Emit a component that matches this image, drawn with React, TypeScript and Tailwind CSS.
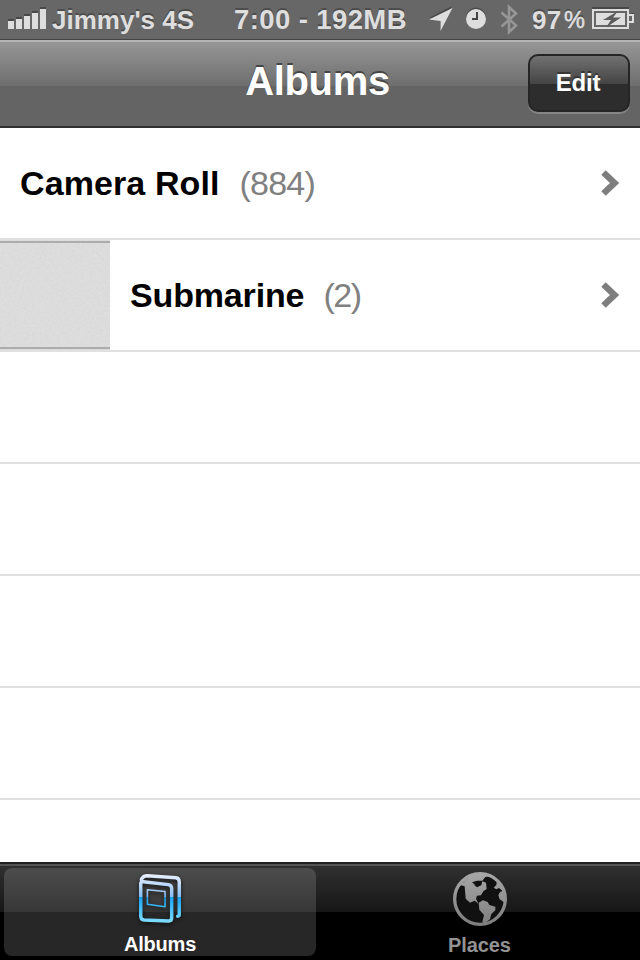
import React from "react";

const shadow = "[text-shadow:0_-2px_0_#4c4c4c]";

function StatusBar() {
  return (
    <header className={`flex h-10 items-center border-b border-[#454545] bg-[#676767] text-[26px] leading-10 font-bold text-[#dedede] ${shadow}`}>
      <svg className="ml-2 h-10 w-[38px] shrink-0" viewBox="0 0 38 40" shapeRendering="crispEdges">
        <path fill="#484848" d="M0 19h6v2H0zM8 17h6v2H8zM16 14h6v2h-6zM24 11h6v2h-6zM32 7h6v2h-6z" />
        <path fill="#dedede" d="M0 21h6v8H0zM8 19h6v10H8zM16 16h6v13h-6zM24 13h6v16h-6zM32 9h6v20h-6z" />
      </svg>
      <span className="ml-[6px] w-[182px] shrink-0 whitespace-nowrap">Jimmy's 4S</span>
      <span className="w-[195px] shrink-0 text-[27.5px] tracking-[0.4px] whitespace-nowrap">7:00 - 192MB</span>
      <svg className="h-10 w-[25px] shrink-0" viewBox="429 0 25 40">
        <path fill="#484848" d="M452 6 429 18l11 1v10z" />
        <path fill="#dedede" d="M452.500 8 429 19.500l11.500 1.500L440.500 31z" />
      </svg>
      <svg className="ml-[11px] h-10 w-[22px] shrink-0" viewBox="465 0 22 40">
        <circle cx="476" cy="17.500" r="10" fill="#484848" />
        <circle cx="476" cy="19" r="10" fill="#dedede" />
        <path d="M477 12v7h-5" fill="none" stroke="#454545" strokeWidth="2" />
      </svg>
      <svg className="ml-[13px] h-10 w-[20px] shrink-0" viewBox="500 0 20 40">
        <path d="m501.500 12.500 14.500 13-7 6.500V7l7 6.500-14.500 13" fill="none" stroke="#969696" strokeWidth="2.600" />
      </svg>
      <span className="ml-[12px] w-[32px] shrink-0 tracking-[0.3px]">97</span>
      <span className="w-[28px] shrink-0 text-[23.5px] font-normal [-webkit-text-stroke:0.600px_#dedede]">%</span>
      <svg className="h-10 w-[44px] shrink-0" viewBox="592 0 44 40">
        <path d="M592 9V7h37v2M630 13h4v2" fill="#484848" />
        <path d="M593 10h35v18h-35z" fill="none" stroke="#dedede" strokeWidth="2" />
        <path d="M629 15h4v7h-4" fill="none" stroke="#dedede" strokeWidth="2" />
        <path d="M596 13h29v12h-29z" fill="#dedede" />
        <path d="m618 11-15 9h8l-5 7.500 15-10h-8z" fill="#5c5c5c" />
      </svg>
    </header>
  );
}

function Navigation() {
  return (
    <nav className="grid h-[88px] grid-cols-[112px_1fr_112px] border-t-2 border-b-2 border-t-[#b5b5b5] border-b-[#303030] bg-[linear-gradient(to_bottom,#969696_0px,#6e6e6e_44px,#646464_44px,#646464_100%)]">
      <h1 className="col-start-2 pr-[5px] text-center text-[40px] leading-[78px] font-bold tracking-[-0.35px] text-white [text-shadow:0_-2px_0_#454545]">Albums</h1>
      <div className="flex justify-end pt-3 pr-[10px]">
        <button className="h-[58px] w-[102px] rounded-[10px] border-2 border-[#252525] bg-[linear-gradient(to_bottom,#717171_0px,#444_28px,#2d2d2d_28px)] pr-[2px] text-[24px] leading-none font-bold tracking-[-0.2px] text-white shadow-[0_2px_0_#858585] [text-shadow:0_-2px_0_#363636]">Edit</button>
      </div>
    </nav>
  );
}

function AlbumRow({ name, count, thumb = false }: { name: string; count: number; thumb?: boolean }) {
  return (
    <li className="flex h-28 border-b-2 border-[#e0e0e0]">
      {thumb && (
        <svg className="h-[110px] w-[110px]" viewBox="0 0 110 110">
          <filter id="grain" x="0" y="0" width="1" height="1" colorInterpolationFilters="sRGB">
            <feTurbulence type="fractalNoise" baseFrequency="0.4" numOctaves="2" />
            <feColorMatrix values="0.04 0 0 0 0.842 0.04 0 0 0 0.842 0.04 0 0 0 0.842 0 0 0 0 1" />
          </filter>
          <rect width="110" height="110" filter="url(#grain)" />
          <path d="M0 2h110M0 108h110" stroke="#acacac" strokeWidth="2" />
        </svg>
      )}
      <div className="flex flex-1 items-center pr-[20px] pl-5 text-[34px] leading-[110px]">
        <strong className={thumb ? "tracking-[-0.15px] text-black" : "tracking-[0.1px] text-black"}>{name}</strong>
        <span className={thumb ? "ml-[19px] tracking-[-1.5px] text-[#808080]" : "ml-[20px] tracking-[-0.8px] text-[#808080]"}>({count})</span>
        <svg className="ml-auto h-[26px] w-[20px]" viewBox="0 0 20 26">
          <path d="m3.500 2.500 11 10.500L3.500 23.500" fill="none" stroke="#7e7e7e" strokeWidth="6.500" />
        </svg>
      </div>
    </li>
  );
}

function AlbumsIcon() {
  return (
    <svg className="h-[56px] w-[50px] drop-shadow-[0_2px_2px_#111]" viewBox="75 36 150 168">
      <defs>
        <linearGradient id="blue" gradientUnits="userSpaceOnUse" x1="0" x2="0" y1="42" y2="194">
          <stop offset="0" stopColor="#edf1ff" /><stop offset=".48" stopColor="#86bdf5" />
          <stop offset=".49" stopColor="#15a3f4" /><stop offset="1" stopColor="#7dddff" />
        </linearGradient>
      </defs>
      <g fill="none" stroke="url(#blue)" strokeLinecap="round" strokeLinejoin="round">
        <path strokeWidth="11" d="M89 70V176q0 11 11 12l78 3q9 0 9-10V89q0-12-11-13l-73-8q-17-2-10-12 5-8 17-8l90 6q11 1 11 13V171q0 5-5 5" />
        <path strokeWidth="5" d="m110 92 56 6v48l-56-8z" />
      </g>
    </svg>
  );
}

function PlacesIcon() {
  return (
    <svg className="h-[56px] w-[56px]" viewBox="65 34 168 168">
      <defs>
        <linearGradient id="gray" gradientUnits="userSpaceOnUse" x1="0" x2="0" y1="36" y2="200">
          <stop stopColor="#a8a8a8" /><stop offset="1" stopColor="#7d7d7d" />
        </linearGradient>
      </defs>
      <circle cx="149" cy="118" r="76" fill="#111" stroke="url(#gray)" strokeWidth="10" />
      <g fill="url(#gray)">
        <path d="m79 86 14-9 10 3 3 37 13 12 14-6 11 9-7-15 3-9 12-1 7-12 10-7-2-19-11-4-3 12-13 6-15-12-26-3-17 5z" />
        <path d="m98 68 24-21 27-8 34 9-18 4-9 11-16 0-15 5 10 8-20-3z" />
        <path d="m200 60 16 20 9 23 2 20-7 4-12-8-4-12 5-10 8-3-11-9-8 4-8-5 8-8z" />
        <path d="m145 129 13-7 14 5 5 9 18 5 0 11-12 11-4 16-15 11-8-3 5-21-14-16z" />
      </g>
    </svg>
  );
}

export default function App() {
  return (
    <div className="flex h-[960px] w-[640px] flex-col overflow-hidden bg-white font-['Liberation_Sans',sans-serif]">
      <StatusBar />
      <Navigation />
      <ul className="h-[734px] shrink-0 overflow-hidden">
        <AlbumRow name="Camera Roll" count={884} />
        <AlbumRow name="Submarine" count={2} thumb />
        {[0, 1, 2, 3].map((row) => <li key={row} className="h-28 border-b-2 border-[#e0e0e0]" />)}
      </ul>
      <footer className="grid h-[98px] shrink-0 grid-cols-2 border-t-2 border-[#202020] bg-[linear-gradient(to_bottom,#535353_0px,#535353_2px,#303030_2px,#161616_48px,#000_48px)] text-[20px] font-bold">
        <button className="mt-1 ml-1 flex h-[88px] w-[312px] flex-col items-center rounded-lg bg-[linear-gradient(to_bottom,#4c4c4c_0px,#373737_44px,#272727_44px)] pt-1 text-white">
          <AlbumsIcon />
          <span className="mt-[7px] leading-6 tracking-[-0.2px]">Albums</span>
        </button>
        <button className="flex flex-col items-center pt-[7px] pr-[1px] text-[#939393]">
          <PlacesIcon />
          <span className="mt-[6px] leading-6 tracking-[-0.1px]">Places</span>
        </button>
      </footer>
    </div>
  );
}
